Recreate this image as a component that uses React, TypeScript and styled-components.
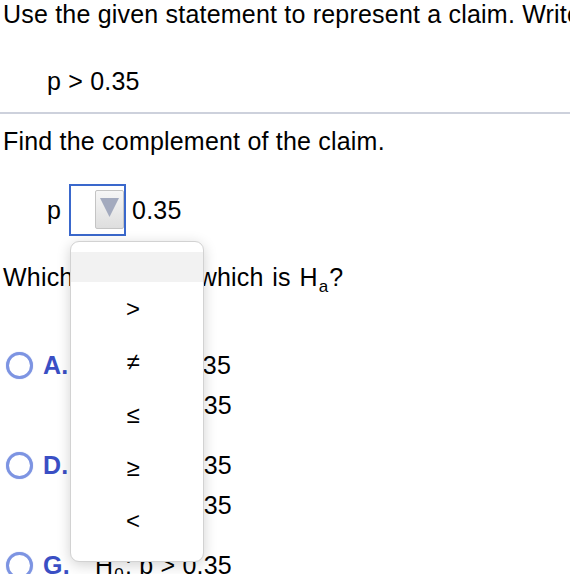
import styled, { createGlobalStyle } from "styled-components";

const GlobalStyle = createGlobalStyle`
  body {
    margin: 0;
    background: #fff;
    color: #000;
    font-family: "Liberation Sans", Arial, sans-serif;
    font-size: 25px;
    letter-spacing: 0.2px;
  }
`;

const Page = styled.div`
  width: 570px;
  height: 574px;
  overflow: hidden;
`;

const Section = styled.div`
  padding: 0 3px;
`;

const Line = styled.div`
  line-height: 28px;
  white-space: nowrap;
`;

const Claim = styled(Line)`
  margin-top: 39px;
  padding-left: 44px;
`;

const Divider = styled.hr`
  margin: 17px 0 13px;
  border: 0;
  height: 2px;
  background: #cdd1dc;
`;

const AnswerRow = styled.div`
  display: flex;
  align-items: center;
  margin-top: 29px;
  padding-left: 44px;
  height: 52px;
`;

const DropWrap = styled.div`
  position: relative;
  margin: 0 6px 0 8px;
`;

const SelectBox = styled.div`
  box-sizing: border-box;
  width: 57px;
  height: 52px;
  border: 2px solid #3a68cc;
  display: flex;
  justify-content: flex-end;
  padding: 4px 0 5px;
`;

const ArrowButton = styled.div`
  box-sizing: border-box;
  width: 29px;
  border: 1px solid #c4c4c4;
  border-radius: 2px;
  background: linear-gradient(#f6f6f6, #dedede);
  display: flex;
  justify-content: center;
  padding-top: 7px;
`;

const Popup = styled.div`
  position: absolute;
  top: 57px;
  left: 1px;
  z-index: 5;
  box-sizing: border-box;
  width: 134px;
  height: 321px;
  padding-top: 10px;
  background: #fff;
  border: 1px solid #d2d2d2;
  border-radius: 9px;
  box-shadow: 0 3px 14px rgba(0, 0, 0, 0.18);
`;

const Item = styled.div<{ $blank?: boolean }>`
  height: ${(p) => (p.$blank ? "30px" : "53px")};
  background: ${(p) => (p.$blank ? "#f2f2f2" : "transparent")};
  display: flex;
  align-items: center;
  justify-content: center;
  padding-right: 8px;
  font-size: 24px;
`;

const Question = styled(Line)`
  margin-top: 27px;
  word-spacing: 1.5px;
`;

const Sub = styled.sub`
  font-size: 17px;
  line-height: 0;
  vertical-align: -6px;
  margin: 0 1px 0 1px;
`;

const Options = styled.div`
  margin-top: 54px;
  display: flex;
  flex-direction: column;
  gap: 20px;
`;

const Option = styled.div`
  display: flex;
  align-items: flex-start;
  padding-left: 6px;
`;

const Radio = styled.span`
  box-sizing: border-box;
  width: 27px;
  height: 27px;
  margin-top: 7px;
  border-radius: 50%;
  border: 3px solid #7d94e2;
  box-shadow: 0 0 1px #9fb0ea;
  background: #fff;
`;

const Letter = styled.span`
  width: 52px;
  margin-left: 10px;
  line-height: 40px;
  font-weight: bold;
  color: #3a4fc4;
`;

const Hyp = styled.div`
  display: flex;
  flex-direction: column;
  line-height: 40px;
  white-space: nowrap;
`;

const symbols = [">", "≠", "≤", "≥", "<"];

const options = [
  { letter: "A.", h0: "≤", ha: ">" },
  { letter: "D.", h0: "=", ha: ">" },
  { letter: "G.", h0: ">", ha: "≤" },
];

function App() {
  return (
    <Page>
      <GlobalStyle />
      <Section>
        <Line>Use the given statement to represent a claim. Write its complement and state which is H0 and which is Ha.</Line>
        <Claim>p &gt; 0.35</Claim>
      </Section>
      <Divider />
      <Section>
        <Line>Find the complement of the claim.</Line>
        <AnswerRow>
          <span>p</span>
          <DropWrap>
            <SelectBox>
              <ArrowButton>
                <svg width="19" height="20" viewBox="0 0 19 20">
                  <path d="M0 0 H19 L9.5 19 Z" fill="#a3aabe" />
                </svg>
              </ArrowButton>
            </SelectBox>
            <Popup>
              <Item $blank />
              {symbols.map((s) => (
                <Item key={s}>{s}</Item>
              ))}
            </Popup>
          </DropWrap>
          <span>0.35</span>
        </AnswerRow>
        <Question>
          Which is H<Sub>0</Sub> and which is H<Sub>a</Sub>?
        </Question>
      </Section>
      <Options>
        {options.map((o) => (
          <Option key={o.letter}>
            <Radio />
            <Letter>{o.letter}</Letter>
            <Hyp>
              <span>
                H<Sub>0</Sub>: p {o.h0} 0.35
              </span>
              <span>
                H<Sub>a</Sub>: p {o.ha} 0.35
              </span>
            </Hyp>
          </Option>
        ))}
      </Options>
    </Page>
  );
}

export default App;
